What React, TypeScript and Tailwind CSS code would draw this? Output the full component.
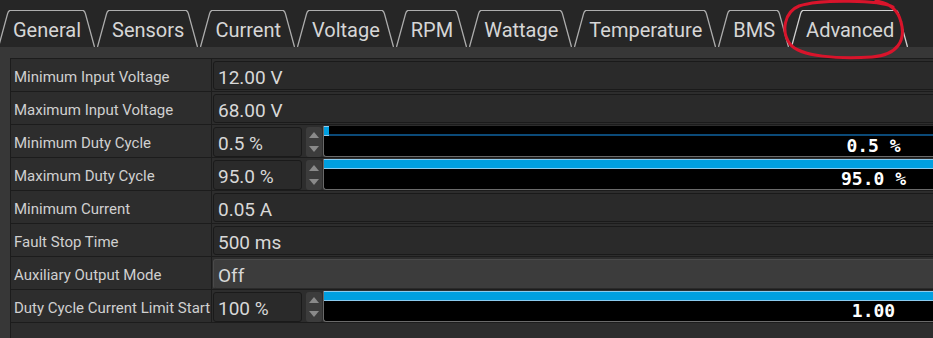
import React from "react";

const tabs = ["General", "Sensors", "Current", "Voltage", "RPM", "Wattage", "Temperature", "BMS", "Advanced"];

function Tab({ label, active }: { label: string; active?: boolean }) {
  const stroke = active ? "#d0d0d0" : "#adadad";
  return (
    <div className="flex h-[37px] shrink-0 mr-[2px]">
      <svg width="12" height="37" className="shrink-0">
        <path d="M0.5 37 L9.6 3.6 Q10.4 0.5 12 0.5" fill="none" stroke={stroke} strokeWidth="1.3" />
      </svg>
      <div
        className={`flex items-center pl-[3px] pr-[2px] pt-[2px] border-t ${active ? "border-[#d0d0d0]" : "border-[#adadad]"} text-[20px] leading-none text-[#d6d6d6]`}
      >
        {label}
      </div>
      <svg width="12" height="37" className="shrink-0">
        <path d="M0 0.5 Q1.6 0.5 2.4 3.6 L11.5 37" fill="none" stroke={stroke} strokeWidth="1.3" />
      </svg>
    </div>
  );
}

function Bar({ pct, text }: { pct: number; text: string }) {
  return (
    <div className="w-[1100px] shrink-0 h-[31px] mt-[1px] flex flex-col bg-black border-l border-b border-[#6a6a6a] rounded-bl-[3px]">
      <div className="relative h-[10px] shrink-0">
        <div className="absolute left-0 right-0 bottom-0 h-[2px] bg-[#0b4a78]" />
        <div
          className="absolute left-0 top-0 h-[10px] bg-[#009fe0] border-y border-[#8ccbee]"
          style={{ width: `${pct}%` }}
        />
      </div>
      <div
        className="flex-1 flex items-center justify-center text-white font-bold text-[18px] leading-none"
        style={{ fontFamily: "'DejaVu Sans Mono', monospace" }}
      >
        {text}
      </div>
    </div>
  );
}

function Spinner() {
  return (
    <div className="w-[16px] h-[30px] shrink-0 ml-[4px] mt-[2px] rounded-[3px] bg-[#3c3c3c] flex flex-col items-center justify-between py-[5px]">
      <svg width="10" height="6"><path d="M0 6 L5 0 L10 6 Z" fill="#8a8a8a" /></svg>
      <svg width="10" height="6"><path d="M0 0 L5 6 L10 0 Z" fill="#8a8a8a" /></svg>
    </div>
  );
}

function TextBox({ value }: { value: string }) {
  return (
    <div className="w-[1200px] shrink-0 h-[29px] mt-[2px] rounded-[3px] bg-[#2a2a2a] border border-[#1a1a1a] flex items-center pl-[4px] pt-[3px] text-[19px] leading-none text-[#d8d8d8]">
      {value}
    </div>
  );
}

function Row({ label, children }: { label: string; children: React.ReactNode }) {
  return (
    <div className="flex h-[33px] border-b border-[#1c1c1c]">
      <div className="w-[201px] shrink-0 border-r border-[#1c1c1c] flex items-center pl-[3px] pt-[4px] text-[15px] text-[#d0d0d0] leading-none">
        {label}
      </div>
      <div className="flex items-start pl-[1px]">{children}</div>
    </div>
  );
}

function SpinBar({ value, pct, text }: { value: string; pct: number; text: string }) {
  return (
    <>
      <div className="w-[89px] shrink-0 h-[30px] mt-[2px] rounded-[3px] bg-[#2a2a2a] border border-[#1a1a1a] flex items-center pl-[4px] pt-[3px] text-[19px] leading-none text-[#d8d8d8]">
        {value}
      </div>
      <Spinner />
      <div className="w-[1px]" />
      <Bar pct={pct} text={text} />
    </>
  );
}

export default function App() {
  return (
    <div
      className="relative w-[933px] h-[338px] overflow-hidden bg-[#262626]"
      style={{ fontFamily: "Roboto, 'Noto Sans', sans-serif" }}
    >
      <div className="h-[47px] flex items-end ml-[-2px]">
        {tabs.map((t) => (
          <Tab key={t} label={t} active={t === "Advanced"} />
        ))}
      </div>
      <div className="bg-[#373737] h-[291px] pt-[11px] pl-[10px]">
        <div className="h-full bg-[#2d2d2d] border-l border-t border-[#1c1c1c] w-[1600px]">
          <Row label="Minimum Input Voltage">
            <TextBox value="12.00 V" />
          </Row>
          <Row label="Maximum Input Voltage">
            <TextBox value="68.00 V" />
          </Row>
          <Row label="Minimum Duty Cycle">
            <SpinBar value="0.5 %" pct={0.5} text="0.5 %" />
          </Row>
          <Row label="Maximum Duty Cycle">
            <SpinBar value="95.0 %" pct={95} text="95.0 %" />
          </Row>
          <Row label="Minimum Current">
            <TextBox value="0.05 A" />
          </Row>
          <Row label="Fault Stop Time">
            <TextBox value="500 ms" />
          </Row>
          <Row label="Auxiliary Output Mode">
            <div className="w-[1200px] shrink-0 h-[30px] mt-[2px] rounded-[3px] bg-[#3c3c3c] border border-[#4a4a4a] border-b-[#2a2a2a] flex items-center pl-[4px] pt-[3px] text-[19px] leading-none text-[#d8d8d8]">
              Off
            </div>
          </Row>
          <Row label="Duty Cycle Current Limit Start">
            <SpinBar value="100 %" pct={100} text="1.00" />
          </Row>
        </div>
      </div>
      <svg className="absolute left-0 top-0 pointer-events-none" width="933" height="70">
        <path
          d="M893 7 C880 0, 820 -1, 799 6 C784 12, 781 32, 790 44 C800 57, 840 59, 872 57 C898 55, 906 40, 901 22 C898 10, 890 3, 876 1"
          fill="none"
          stroke="#d9142b"
          strokeWidth="3"
          strokeLinecap="round"
        />
      </svg>
    </div>
  );
}
